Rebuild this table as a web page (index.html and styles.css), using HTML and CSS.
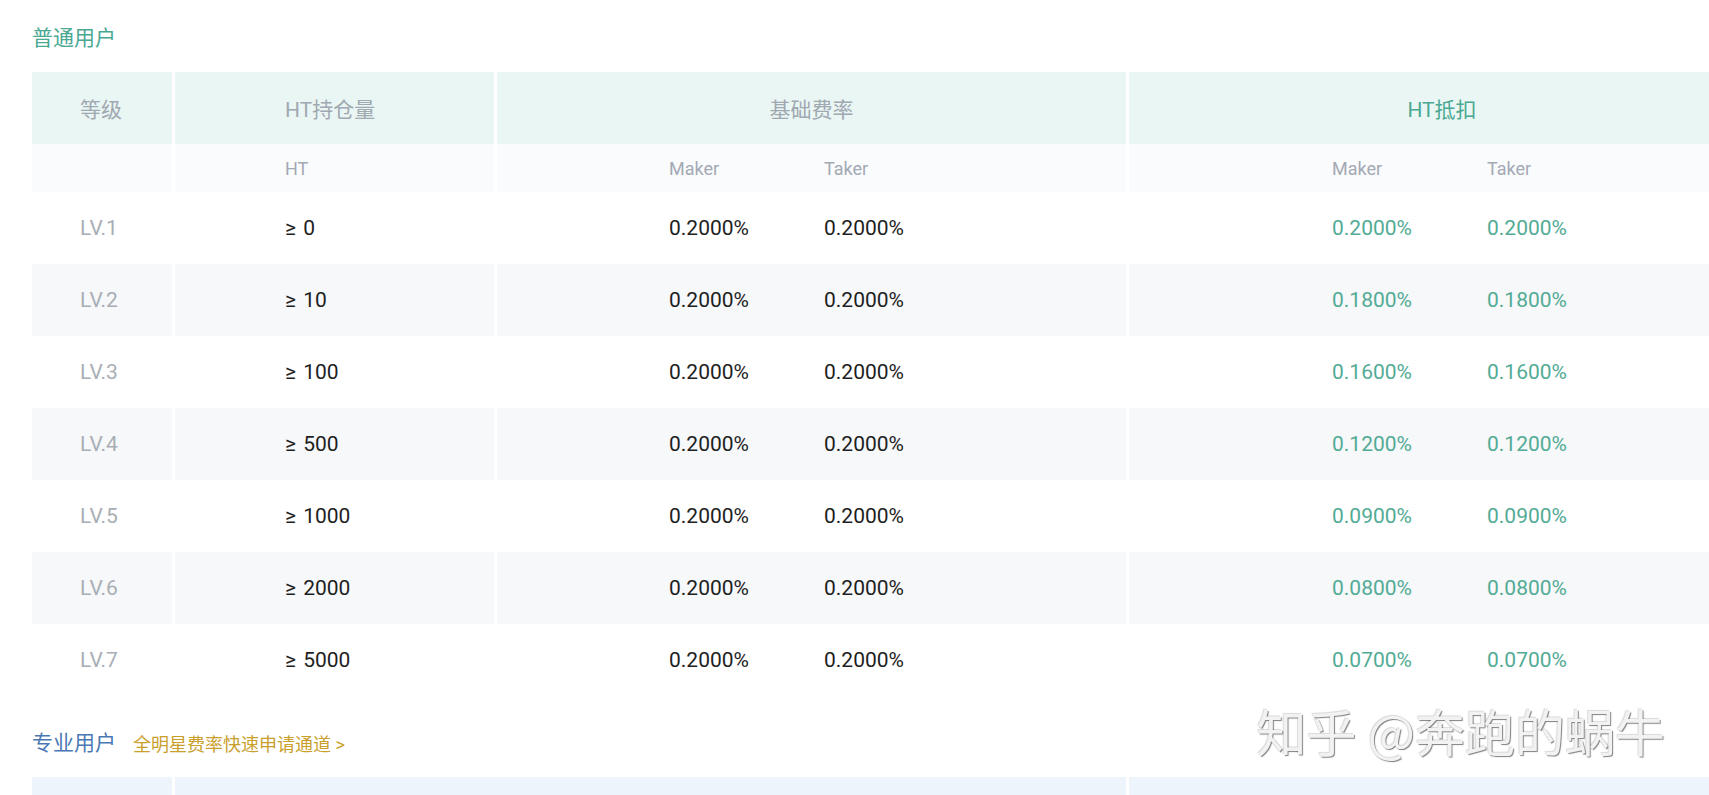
FILE: index.html
```html
<!DOCTYPE html>
<html lang="zh-CN">
<head>
<meta charset="utf-8">
<title>费率</title>
<link rel="stylesheet" href="styles.css">
</head>
<body>
<main class="page">
  <h2 class="sec-title normal">普通用户</h2>
  <div class="fee-table">
    <div class="row head">
      <div class="cell c1">等级</div>
      <div class="cell c2">HT持仓量</div>
      <div class="cell c3 center">基础费率</div>
      <div class="cell c4 center accent">HT抵扣</div>
    </div>
    <div class="row sub">
      <div class="cell c1"></div>
      <div class="cell c2">HT</div>
      <div class="cell c3 pair"><span>Maker</span><span>Taker</span></div>
      <div class="cell c4 pair"><span>Maker</span><span>Taker</span></div>
    </div>
    <div class="row data">
      <div class="cell c1 lv">LV.1</div>
      <div class="cell c2 amt">≥ 0</div>
      <div class="cell c3 pair"><span>0.2000%</span><span>0.2000%</span></div>
      <div class="cell c4 pair green"><span>0.2000%</span><span>0.2000%</span></div>
    </div>
    <div class="row data stripe">
      <div class="cell c1 lv">LV.2</div>
      <div class="cell c2 amt">≥ 10</div>
      <div class="cell c3 pair"><span>0.2000%</span><span>0.2000%</span></div>
      <div class="cell c4 pair green"><span>0.1800%</span><span>0.1800%</span></div>
    </div>
    <div class="row data">
      <div class="cell c1 lv">LV.3</div>
      <div class="cell c2 amt">≥ 100</div>
      <div class="cell c3 pair"><span>0.2000%</span><span>0.2000%</span></div>
      <div class="cell c4 pair green"><span>0.1600%</span><span>0.1600%</span></div>
    </div>
    <div class="row data stripe">
      <div class="cell c1 lv">LV.4</div>
      <div class="cell c2 amt">≥ 500</div>
      <div class="cell c3 pair"><span>0.2000%</span><span>0.2000%</span></div>
      <div class="cell c4 pair green"><span>0.1200%</span><span>0.1200%</span></div>
    </div>
    <div class="row data">
      <div class="cell c1 lv">LV.5</div>
      <div class="cell c2 amt">≥ 1000</div>
      <div class="cell c3 pair"><span>0.2000%</span><span>0.2000%</span></div>
      <div class="cell c4 pair green"><span>0.0900%</span><span>0.0900%</span></div>
    </div>
    <div class="row data stripe">
      <div class="cell c1 lv">LV.6</div>
      <div class="cell c2 amt">≥ 2000</div>
      <div class="cell c3 pair"><span>0.2000%</span><span>0.2000%</span></div>
      <div class="cell c4 pair green"><span>0.0800%</span><span>0.0800%</span></div>
    </div>
    <div class="row data">
      <div class="cell c1 lv">LV.7</div>
      <div class="cell c2 amt">≥ 5000</div>
      <div class="cell c3 pair"><span>0.2000%</span><span>0.2000%</span></div>
      <div class="cell c4 pair green"><span>0.0700%</span><span>0.0700%</span></div>
    </div>
  </div>

  <div class="pro-title">
    <h2 class="sec-title pro">专业用户</h2>
    <a class="apply-link" href="#">全明星费率快速申请通道 &gt;</a>
  </div>
  <div class="fee-table pro-table">
    <div class="row head">
      <div class="cell"></div>
      <div class="cell"></div>
      <div class="cell"></div>
    </div>
  </div>
</main>
<div class="watermark">知乎 @奔跑的蜗牛</div>
</body>
</html>
```

FILE: styles.css
```css
html, body {
  margin: 0;
  padding: 0;
  overflow: hidden;
  background: #ffffff;
}

body {
  font-family: Roboto, "Noto Sans CJK SC", sans-serif;
  color: #222222;
  position: relative;
  min-height: 795px;
}

.page {
  padding: 24px 0 0 32px;
}

.sec-title {
  margin: 0;
  font-size: 21px;
  line-height: 28px;
  font-weight: 400;
}

.sec-title.normal {
  color: #4ba892;
  margin-bottom: 20px;
}

.fee-table {
  display: flex;
  flex-direction: column;
  width: 1723px;
}

.row {
  display: grid;
  grid-template-columns: 140px 319px 629px 626px;
  column-gap: 3px;
}

.cell {
  display: flex;
  align-items: center;
  box-sizing: border-box;
  white-space: nowrap;
}

.head .cell {
  height: 72px;
  background: #eaf6f4;
  font-size: 21px;
  color: #a0a8b1;
}

.sub .cell {
  height: 48px;
  background: #fafbfc;
  font-size: 18px;
  color: #a3a9b4;
}

.data .cell {
  height: 72px;
  background: #ffffff;
  font-size: 21px;
}

.data.stripe .cell {
  background: #f6f8fa;
}

.c1 { padding-left: 48px; }
.c2 { padding-left: 110px; }
.c3.pair { padding-left: 172px; }
.c4.pair { padding-left: 203px; }

.center {
  justify-content: center;
}

.head .accent {
  color: #4ba892;
}

.pair span {
  width: 155px;
  flex: none;
}

.lv {
  color: #a9aeb5;
}

.amt {
  color: #1e1e1e;
  word-spacing: 2px;
}

.data .c3 {
  color: #1e1e1e;
}

.green {
  color: #52ab95;
}

.pro-title {
  display: flex;
  align-items: center;
  gap: 17px;
  margin-top: 33px;
  margin-bottom: 20px;
  height: 28px;
}

.sec-title.pro {
  color: #4a78b5;
}

.apply-link {
  font-size: 18px;
  color: #c9a02c;
  text-decoration: none;
}

.pro-table .row {
  grid-template-columns: 140px 951px 626px;
}

.pro-table .head .cell {
  background: #edf4fc;
}

.watermark {
  position: absolute;
  right: 44px;
  top: 694px;
  font-family: "Noto Sans CJK SC", sans-serif;
  font-size: 50px;
  line-height: 72px;
  font-weight: 400;
  color: #f2f2f2;
  text-shadow: 1px 1px 1px rgba(0, 0, 0, 0.5), -1px -1px 1px rgba(0, 0, 0, 0.15);
  white-space: nowrap;
}
```
